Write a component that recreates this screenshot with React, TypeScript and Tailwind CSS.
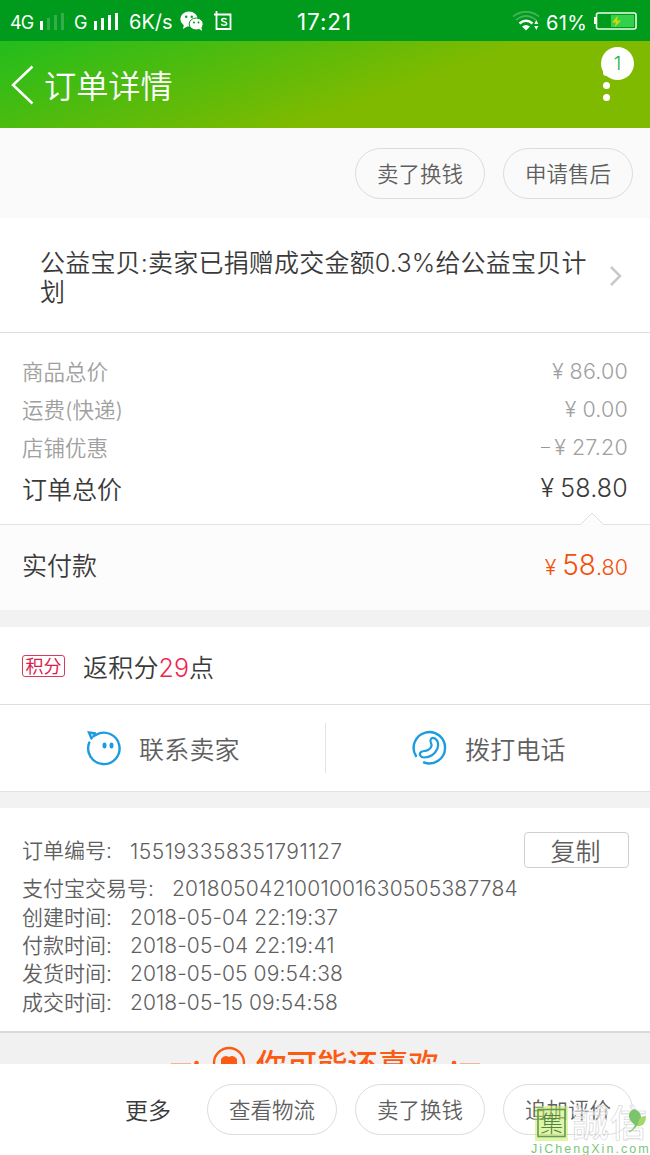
import type { ReactNode } from "react";

const prices = [
  { label: "商品总价", value: "￥86.00" },
  { label: "运费(快递)", value: "￥0.00" },
  { label: "店铺优惠", value: "-￥27.20" },
];

const times = [
  { label: "创建时间:", value: "2018-05-04 22:19:37" },
  { label: "付款时间:", value: "2018-05-04 22:19:41" },
  { label: "发货时间:", value: "2018-05-05 09:54:38" },
  { label: "成交时间:", value: "2018-05-15 09:54:58" },
];

function Pill({ children }: { children: ReactNode }) {
  return (
    <button className="flex h-[51px] w-[130px] shrink-0 items-center justify-center rounded-full border border-[#dcdcdc] pt-[3px] text-[21.5px] leading-none text-[#5f5f5f]">
      {children}
    </button>
  );
}

function Money({ value }: { value: string }) {
  const [sign, amount] = value.split("￥");
  return (
    <span className="flex items-center pt-px">
      {sign && <span className="mr-0.5 h-[1.5px] w-[9px] bg-[#999]" />}
      <Yen />
      <span className="tracking-[0.2px]">{amount}</span>
    </span>
  );
}

function Yen() {
  return <span className="mr-[4px] inline-block w-[0.72em] text-center">¥</span>;
}

function StatusBar() {
  return (
    <div className="flex h-[41px] shrink-0 items-center bg-[#009a1c] pl-[10px] text-[20px] font-normal leading-none text-white">
      <span className="w-[28px] pt-[5px] text-[18px] tracking-[-0.8px]">4G</span>
      <svg width="28" height="20" viewBox="0 0 28 20" fill="#fff">
        <rect x="2" y="10" width="3" height="9" />
        <g opacity=".2">
          <rect x="9" y="7" width="3" height="12" />
          <rect x="16" y="4" width="3" height="15" />
          <rect x="23" y="2" width="3" height="17" />
        </g>
      </svg>
      <span className="ml-[8px] w-[16px] pt-[5px] text-[18px]">G</span>
      <svg width="32" height="20" viewBox="0 0 32 20" fill="#fff">
        <rect x="4" y="10" width="3" height="9" />
        <rect x="11" y="7" width="3" height="12" />
        <rect x="18" y="4" width="3" height="15" />
        <rect x="25" y="2" width="3" height="17" />
      </svg>
      <span className="ml-[7px] w-[51px] whitespace-nowrap pt-[3px] text-[20px]">6K/s</span>
      <svg width="24" height="22" viewBox="0 0 24 22" fill="#fff">
        <ellipse cx="9" cy="9" rx="8.7" ry="7.4" />
        <path d="M4 14l-1 5 5-3z" />
        <circle cx="6.2" cy="6.8" r="1.2" fill="#009a1c" />
        <circle cx="11.8" cy="6.8" r="1.2" fill="#009a1c" />
        <ellipse cx="16.2" cy="14" rx="7" ry="6" fill="#fff" stroke="#009a1c" strokeWidth="1" />
        <path d="M18 18l4 3-.7-5z" />
        <circle cx="14" cy="12.5" r="1" fill="#009a1c" />
        <circle cx="18.5" cy="12.5" r="1" fill="#009a1c" />
      </svg>
      <svg className="ml-[10px]" width="19" height="20" viewBox="0 0 19 20" fill="none" stroke="#fff">
        <path d="M2.500 0v18h14V3.500H0" strokeWidth="1.800" />
        <path d="M12.500 8.500c-.5-1.500-4.800-1.500-4.800.5 0 2.300 5 1.300 5 3.700 0 2.200-5 2-5.200 0" strokeWidth="1.500" />
      </svg>
      <span className="ml-[64px] w-[58px] whitespace-nowrap pt-[4px] text-[22.5px] tracking-[0.9px]">17:21</span>
      <svg className="ml-[157px] mt-[2px]" width="28" height="21" viewBox="0 0 28 21" fill="none" stroke="#fff">
        <path d="M1 5.5Q14-4 27 5.5" strokeWidth="2" opacity=".25" />
        <path d="M4 9Q14 1 24 9" strokeWidth="2" opacity=".25" />
        <path d="M7.5 12.5q6.500-5.500 13 0" strokeWidth="2.500" />
        <path d="M10 15.500q4-3 8 0l-4 4z" fill="#fff" stroke="none" />
        <path d="M22.300 13l2-4 2 4zM22.300 15l2 4 2-4z" fill="#fff" stroke="none" />
      </svg>
      <span className="ml-[6px] w-[42px] whitespace-nowrap pt-[4px] text-[20px] tracking-[0.3px]">61%</span>
      <svg className="ml-[5px]" width="45" height="19" viewBox="0 0 45 19">
        <path d="M3.500 6H1v7h2.500" fill="#fff" />
        <rect x="3.500" y="2" width="39.500" height="16" rx="2" fill="none" stroke="#eaffea" strokeWidth="1.600" />
        <rect x="18" y="4" width="23" height="12" fill="#35d04b" />
        <path d="M25 4.500l-6 7h4l-1.500 5 6.500-7h-4z" fill="#d3d800" />
      </svg>
    </div>
  );
}

function Header() {
  return (
    <header className="flex h-[87px] shrink-0 items-center bg-[linear-gradient(160deg,#22bd1d_0%,#55bb0c_33%,#7fba00_60%,#80ba00_100%)] pl-[11px] text-white">
      <svg className="mt-[1px]" width="23" height="40" viewBox="0 0 23 40" fill="none" stroke="#fff" strokeWidth="2.500">
        <path d="M21.500 1.500L2 20l19.500 18.500" />
      </svg>
      <h1 className="ml-[10px] pt-[5px] text-[32.200px] leading-none">订单详情</h1>
      <div className="relative ml-auto mr-[16px] h-full w-[34px]">
        <span className="absolute left-[1px] top-[6px] flex size-[33px] items-center justify-center rounded-full bg-white pt-[2px] text-[19px] text-[#17ad45]">
          1
        </span>
        <span className="absolute left-[3px] top-[28px] size-[7px] rounded-full bg-white" />
        <span className="absolute left-[3px] top-[41px] size-[7px] rounded-full bg-white" />
        <span className="absolute left-[3px] top-[53px] size-[7px] rounded-full bg-white" />
      </div>
    </header>
  );
}

function Watermark() {
  return (
    <svg className="absolute left-[526px] top-[1100px]" width="124" height="55" viewBox="0 0 124 55">
      <rect x="9" y="6" width="33" height="35" fill="#c9ed5c" opacity=".55" />
      <rect x="12" y="9.500" width="27" height="27" fill="none" stroke="#65995a" strokeWidth="1.600" />
      <text x="14" y="32" fontSize="23" fontWeight="300" fill="#4f8548" className="font-['Noto_Sans_CJK_TC',sans-serif]">集</text>
      <g fill="#fff" fillOpacity=".6" stroke="#cfcfcf" strokeWidth=".6" fontSize="37" fontWeight="500" className="font-['Noto_Sans_CJK_TC',sans-serif]">
        <text x="46" y="37">誠</text>
        <text x="84" y="37">信</text>
      </g>
      <path d="M109 25c-8-6-8-13-1-16 7 2 9 8 5 15l-7 6z" fill="#7cc46c" />
      <path d="M112 25c0-7 4-9 8-9 0 8-4 11-9 10z" fill="#a5d86c" />
      <path d="M111 25q-4 5-8 7" fill="none" stroke="#7cc46c" strokeWidth="1.200" />
      <text x="5" y="53" fontSize="12.500" fontWeight="400" letterSpacing="2.050" fill="#7ac77b" className="font-['Liberation_Sans',sans-serif]">JiChengXin.com</text>
    </svg>
  );
}

export default function App() {
  return (
    <div className="relative flex h-[1155px] w-[650px] flex-col overflow-hidden bg-white font-['Inter','Noto_Sans_CJK_SC',sans-serif] font-[350] text-[#3a3a3a]">
      <StatusBar />
      <Header />

      <div className="flex h-[90px] shrink-0 items-center justify-end gap-[18px] bg-[#fafafa] pr-[17px] pt-px">
        <Pill>卖了换钱</Pill>
        <Pill>申请售后</Pill>
      </div>

      <div className="flex h-[115px] shrink-0 items-center border-b border-[#dedede] pl-[40px] pr-[27px]">
        <p className="w-[556px] pt-[5px] text-[25px] leading-[29px] tracking-[0.2px]">公益宝贝:卖家已捐赠成交金额0.3%给公益宝贝计划</p>
        <svg className="ml-auto mt-[2px]" width="14" height="22" viewBox="0 0 14 22" fill="none" stroke="#c9c9c9" strokeWidth="2.500">
          <path d="M2 2l9 9-9 9" />
        </svg>
      </div>

      <section className="relative h-[192px] shrink-0 border-b border-[#e2e2e2] px-[22px] pt-[19px]">
        {prices.map((p) => (
          <div key={p.label} className="flex h-[38px] items-center justify-between text-[21.500px] leading-none text-[#a0a0a0]">
            <span className="pt-[4px]">{p.label}</span>
            <Money value={p.value} />
          </div>
        ))}
        <div className="flex h-[44px] items-center justify-between text-[25px] leading-none">
          <span className="pt-[5px]">订单总价</span>
          <Money value="￥58.80" />
        </div>
        <svg className="absolute bottom-[-1px] left-[580px]" width="24" height="13" viewBox="0 0 24 13">
          <path d="M0 13L12 1l12 12z" fill="#fcfcfc" />
          <path d="M0.500 12.500L12 1l11.500 11.500" fill="none" stroke="#dedede" />
        </svg>
      </section>

      <div className="flex h-[85px] shrink-0 items-center justify-between bg-[#fcfcfc] px-[22px] pb-[3px] leading-none">
        <span className="text-[25px]">实付款</span>
        <span className="flex items-baseline pb-[2px] text-[21.500px] text-[#f4500b]">
          <Yen />
          <span className="text-[28px]">58</span>
          <span>.80</span>
        </span>
      </div>
      <div className="h-[17px] shrink-0 bg-[#f2f2f2]" />

      <div className="flex h-[78px] shrink-0 items-center border-b border-[#dedede] pl-[22px] leading-none">
        <span className="flex h-[22px] w-[43px] items-center justify-center rounded-[3px] border border-[#d83a60] pt-[2px] text-[18px] font-normal text-[#dc1c4c]">积分</span>
        <span className="ml-[18px] pt-[5px] text-[25px] tracking-[0.2px]">
          返积分<span className="tracking-[0px] text-[#f02450]">29</span>点
        </span>
      </div>

      <div className="flex h-[86px] shrink-0 items-center text-[25px] leading-none tracking-[0.2px] text-[#5f5f5f]">
        <div className="flex w-[325px] items-center pl-[86px]">
          <svg width="36" height="36" viewBox="0 0 36 36" fill="none" stroke="#1c9ce0" strokeWidth="2.400" strokeLinecap="round">
            <path d="M3.300 12.500A15.700 15.700 0 1 0 10 4.800" />
            <path d="M5.500 8.500L3 2.500l5.500.8-1 3L10 4.800" />
            <g fill="#1c9ce0" stroke="none">
              <ellipse cx="18.500" cy="15.500" rx="2" ry="3" />
              <ellipse cx="25.500" cy="15.500" rx="2" ry="3" />
            </g>
          </svg>
          <span className="ml-[17px] pt-[4px]">联系卖家</span>
        </div>
        <div className="h-[50px] w-px bg-[#e5e5e5]" />
        <div className="flex items-center pl-[86px]">
          <svg width="36" height="36" viewBox="0 0 36 36" fill="none" stroke="#1c9ce0" strokeWidth="2.400" strokeLinecap="round" strokeLinejoin="round">
            <path d="M4 26A15.700 15.700 0 1 1 12 32.500" />
            <path d="M21.500 8c-2.500-.5-4 2.500-2.500 5 1.500 2.500 0 5.500-3 7-2.500 1.500-5 .5-7 2-2.500 2-.5 5.500 3 5.500 6 0 11-3.500 13.500-9 1.500-4 .5-9.500-4-10.500z" strokeWidth="2.200" />
          </svg>
          <span className="ml-[17px] pt-[4px]">拨打电话</span>
        </div>
      </div>
      <div className="h-[17px] shrink-0 border-t border-[#e2e2e2] bg-[#f2f2f2]" />

      <section className="h-[225px] shrink-0 border-b-2 border-[#d9d9d9] pl-[22px] pr-[21px] pt-[21px] text-[21px] leading-none text-[#5f5f5f]">
        <div className="flex h-[42px] items-center">
          <span className="w-[108px] pt-px">订单编号:</span>
          <span className="pt-[2px] tracking-[0.500px]">155193358351791127</span>
          <button className="ml-auto flex h-[36px] w-[105px] items-center justify-center rounded-[4px] border border-[#cfcfcf] pr-[2px] pt-[4px] text-[25px]">复制</button>
        </div>
        <div className="flex h-[33px] items-center pt-[2px]">
          <span className="w-[150px]">支付宝交易号:</span>
          <span className="tracking-[0.230px]">2018050421001001630505387784</span>
        </div>
        <div className="-mt-px">
          {times.map((t) => (
            <div key={t.label} className="flex h-[28.300px] items-center">
              <span className="w-[108px]">{t.label}</span>
              <span className="tracking-[0.080px]">{t.value}</span>
            </div>
          ))}
        </div>
      </section>

      <div className="flex h-[31px] shrink-0 items-start overflow-hidden bg-[#f1f1f1] pl-[171px] pt-[12px] text-[#fb5b12]">
        <svg className="mt-[14px] shrink-0" width="30" height="6" viewBox="0 0 30 6" fill="currentColor">
          <path d="M0 4h20v1H0z" opacity=".4" />
          <circle cx="25.500" cy="4" r="2.300" />
        </svg>
        <svg className="ml-[11px] mt-[1px] shrink-0" width="34" height="34" viewBox="0 0 34 34" fill="none" stroke="currentColor" strokeWidth="2.300">
          <circle cx="17" cy="17" r="15" />
          <path d="M17 25l-8-7v-5q3.500-5 8-2 4.500-3 8 2v5z" fill="currentColor" stroke="none" />
        </svg>
        <span className="ml-[10px] mt-[4px] whitespace-nowrap text-[30.500px] font-medium leading-[32px]">你可能还喜欢</span>
        <svg className="ml-[12px] mt-[14px] shrink-0" width="30" height="6" viewBox="0 0 30 6" fill="currentColor">
          <circle cx="3" cy="4" r="2.300" />
          <path d="M9 4h20v1H9z" opacity=".4" />
        </svg>
      </div>

      <footer className="flex h-[91px] shrink-0 items-center justify-end gap-[18px] bg-white pr-[17px]">
        <span className="mr-[18px] pt-[4px] text-[23px] leading-none">更多</span>
        <Pill>查看物流</Pill>
        <Pill>卖了换钱</Pill>
        <Pill>追加评价</Pill>
      </footer>
      <Watermark />
    </div>
  );
}
